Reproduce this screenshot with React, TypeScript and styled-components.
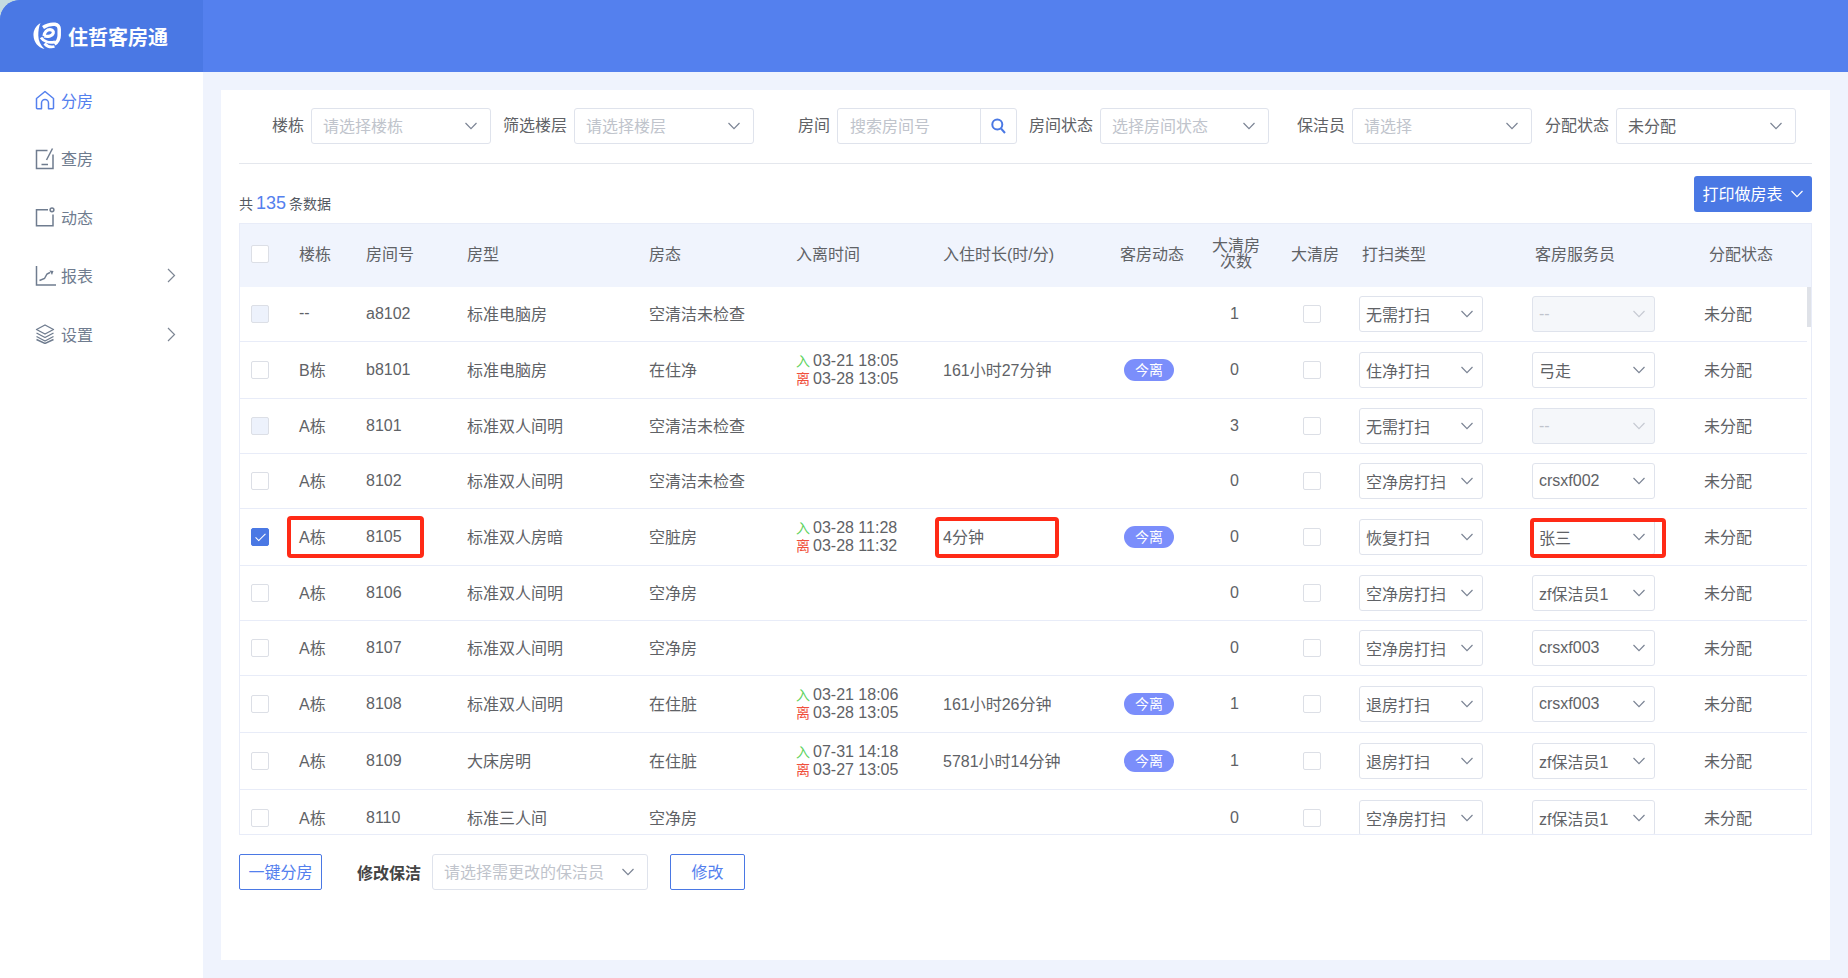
import styled, { createGlobalStyle } from "styled-components"
import { ReactNode } from "react"

const GlobalStyle = createGlobalStyle`
  html, body { margin: 0; padding: 0; height: 100%; }
  body {
    background: #eff3fd;
    font-family: "Liberation Sans", "Noto Sans CJK SC", sans-serif;
    font-size: 16px;
    color: #606266;
    overflow: hidden;
  }
  * { box-sizing: border-box; }
`

const COLUMNS = "59px 67px 101px 182px 147px 147px 177px 81px 70px 88px 173px 172px 1fr"

type RoomRow = {
  building: string
  room: string
  type: string
  status: string
  checkIn?: string
  checkOut?: string
  duration?: string
  count: number
  clean: string
  staff: string
  locked?: boolean
  checked?: boolean
  height: number
}

const rows: RoomRow[] = [
  { building: "--", room: "a8102", type: "标准电脑房", status: "空清洁未检查", count: 1, clean: "无需打扫", staff: "--", locked: true, height: 55 },
  { building: "B栋", room: "b8101", type: "标准电脑房", status: "在住净", checkIn: "03-21 18:05", checkOut: "03-28 13:05", duration: "161小时27分钟", count: 0, clean: "住净打扫", staff: "弓走", height: 57 },
  { building: "A栋", room: "8101", type: "标准双人间明", status: "空清洁未检查", count: 3, clean: "无需打扫", staff: "--", locked: true, height: 55 },
  { building: "A栋", room: "8102", type: "标准双人间明", status: "空清洁未检查", count: 0, clean: "空净房打扫", staff: "crsxf002", height: 55 },
  { building: "A栋", room: "8105", type: "标准双人房暗", status: "空脏房", checkIn: "03-28 11:28", checkOut: "03-28 11:32", duration: "4分钟", count: 0, clean: "恢复打扫", staff: "张三", checked: true, height: 57 },
  { building: "A栋", room: "8106", type: "标准双人间明", status: "空净房", count: 0, clean: "空净房打扫", staff: "zf保洁员1", height: 55 },
  { building: "A栋", room: "8107", type: "标准双人间明", status: "空净房", count: 0, clean: "空净房打扫", staff: "crsxf003", height: 55 },
  { building: "A栋", room: "8108", type: "标准双人间明", status: "在住脏", checkIn: "03-21 18:06", checkOut: "03-28 13:05", duration: "161小时26分钟", count: 1, clean: "退房打扫", staff: "crsxf003", height: 57 },
  { building: "A栋", room: "8109", type: "大床房明", status: "在住脏", checkIn: "07-31 14:18", checkOut: "03-27 13:05", duration: "5781小时14分钟", count: 1, clean: "退房打扫", staff: "zf保洁员1", height: 57 },
  { building: "A栋", room: "8110", type: "标准三人间", status: "空净房", count: 0, clean: "空净房打扫", staff: "zf保洁员1", height: 57 },
]

const Chevron = ({ color = "#7b8494" }: { color?: string }) => (
  <svg width="14" height="8" viewBox="0 0 14 8" fill="none" stroke={color} strokeWidth="1.2">
    <path d="M1.5 1l5.5 5.6L12.500 1" />
  </svg>
)

const Logo = () => (
  <svg width="28" height="28" viewBox="0 0 28 28" fill="none" stroke="#fff">
    <path d="M7.500 1C2.500 4 .3 8.500.5 13.500.8 20 5 25.500 11.500 27 7.500 23 5.300 18.500 5.300 13.500 5.300 9 5.800 4.500 7.500 1z" fill="#fff" stroke="none" />
    <path d="M10 5.500C14 2.800 18 1.800 22 2.300c3 .5 4.200 2 4.200 5v6c0 4-1.500 6.700-4.700 8.700" strokeWidth="3.500" />
    <path d="M11 14c.5-3.800 3-6.300 6-6.300 2.500 0 3.800 1.600 3.200 3.500-.8 2.500-4.500 4-9.200 2.800" strokeWidth="3.200" />
    <path d="M8 15.500c2.500 4 8 6 14 4.300" strokeWidth="2.800" />
    <path d="M11.500 21.500c2.500 3 6 4 10 3" strokeWidth="2.800" />
  </svg>
)

const HomeIcon = () => (
  <svg width="20" height="20" viewBox="0 0 20 20" fill="none" stroke="#5480ee" strokeWidth="1.500" strokeLinejoin="round">
    <path d="M1.500 8.500L10 1.500l8.500 7V18a.8.8 0 0 1-.8.8H13.500V13a3.500 3.500 0 0 0-7 0v5.800H2.300a.8.800 0 0 1-.8-.8z" />
  </svg>
)

const CheckIcon = () => (
  <svg width="20" height="22" viewBox="0 0 20 22" fill="none" stroke="#6f7c8f" strokeWidth="1.500">
    <path d="M12.500 2.500H1.500v18h16.500V6.500" />
    <path d="M17.500.5L11.500 12" />
    <path d="M6.500 16.500h6.500" />
  </svg>
)

const DynamicIcon = () => (
  <svg width="20" height="20" viewBox="0 0 20 20" fill="none" stroke="#6f7c8f" strokeWidth="1.500">
    <path d="M13 2.800H1.500v16h16.500V7.500" />
    <circle cx="17" cy="2.800" r="1.900" />
  </svg>
)

const ChartIcon = () => (
  <svg width="22" height="22" viewBox="0 0 22 22" fill="none" stroke="#6f7c8f" strokeWidth="1.500">
    <path d="M1.500 1v19h19.500" />
    <path d="M4.500 15.500l5-2 2.500-4.500 3-1.500" />
    <path d="M14.500 5.500l4 .5-1.500 4z" fill="#6f7c8f" stroke="none" />
  </svg>
)

const LayersIcon = () => (
  <svg width="20" height="20" viewBox="0 0 20 20" fill="none" stroke="#6f7c8f" strokeWidth="1.400" strokeLinejoin="round">
    <path d="M10 1L18.500 5.500 10 10 1.500 5.500z" />
    <path d="M1.500 9L10 13.500 18.500 9" />
    <path d="M1.500 12.500L10 17 18.500 12.500" />
    <path d="M1.500 15.500L10 19.500 18.500 15.500" />
  </svg>
)

const RightArrow = () => (
  <svg width="9" height="15" viewBox="0 0 9 15" fill="none" stroke="#7d8694" strokeWidth="1.200">
    <path d="M1 1l6.500 6.500L1 14" />
  </svg>
)

const SearchIcon = () => (
  <svg width="15" height="16" viewBox="0 0 15 16" fill="none" stroke="#4a78e4" strokeWidth="2">
    <circle cx="6.300" cy="6.500" r="5" />
    <path d="M10 10.500l4 4.500" />
  </svg>
)

const menu: { label: string; icon: ReactNode; active?: boolean; more?: boolean }[] = [
  { label: "分房", icon: <HomeIcon />, active: true },
  { label: "查房", icon: <CheckIcon /> },
  { label: "动态", icon: <DynamicIcon /> },
  { label: "报表", icon: <ChartIcon />, more: true },
  { label: "设置", icon: <LayersIcon />, more: true },
]

type SelectBoxProps = {
  value?: string
  placeholder?: string
  width: number
  disabled?: boolean
  compact?: boolean
}

const SelectBox = ({ value, placeholder, width, disabled, compact }: SelectBoxProps) => (
  <Select $width={width} $disabled={disabled} $compact={compact}>
    <SelectText $muted={!value || disabled} $compact={compact}>{value ?? placeholder}</SelectText>
    <Chevron color={disabled ? "#c6cad2" : "#7b8494"} />
  </Select>
)

export default function App() {
  return (
    <Shell>
      <GlobalStyle />
      <TopBar>
        <Brand>
          <Logo />
          <BrandName>住哲客房通</BrandName>
        </Brand>
      </TopBar>
      <Body>
        <Sidebar>
          {menu.map((item) => (
            <MenuItem key={item.label} $active={item.active}>
              <MenuIcon>{item.icon}</MenuIcon>
              <MenuLabel>{item.label}</MenuLabel>
              {item.more && <RightArrow />}
            </MenuItem>
          ))}
        </Sidebar>
        <Content>
          <Card>
            <Filters>
              <FilterLabel $width={65}>楼栋</FilterLabel>
              <SelectBox placeholder="请选择楼栋" width={180} />
              <FilterLabel>筛选楼层</FilterLabel>
              <SelectBox placeholder="请选择楼层" width={180} />
              <FilterLabel>房间</FilterLabel>
              <SearchInput>
                <SearchText>搜索房间号</SearchText>
                <SearchButton><SearchIcon /></SearchButton>
              </SearchInput>
              <FilterLabel>房间状态</FilterLabel>
              <SelectBox placeholder="选择房间状态" width={169} />
              <FilterLabel>保洁员</FilterLabel>
              <SelectBox placeholder="请选择" width={180} />
              <FilterLabel $width={77}>分配状态</FilterLabel>
              <SelectBox value="未分配" width={180} />
            </Filters>
            <Toolbar>
              <Count>共<CountNumber>135</CountNumber>条数据</Count>
              <PrintButton><ButtonText>打印做房表</ButtonText><Chevron color="#fff" /></PrintButton>
            </Toolbar>
            <TableWrap>
              <HeaderRow>
                <Cell><CheckBox /></Cell>
                <TextCell>楼栋</TextCell>
                <TextCell>房间号</TextCell>
                <TextCell>房型</TextCell>
                <TextCell>房态</TextCell>
                <TextCell>入离时间</TextCell>
                <TextCell>入住时长(时/分)</TextCell>
                <TextCell>客房动态</TextCell>
                <TwoLineHead>大清房<br />次数</TwoLineHead>
                <HeadInset $left={20}>大清房</HeadInset>
                <HeadInset>打扫类型</HeadInset>
                <HeadInset>客房服务员</HeadInset>
                <HeadInset $left={5}>分配状态</HeadInset>
              </HeaderRow>
              <TableBody>
                {rows.map((row) => (
                  <Row key={row.room} $height={row.height}>
                    <Cell><CheckBox $disabled={row.locked} $checked={row.checked} /></Cell>
                    <TextCell>{row.building}</TextCell>
                    <Cell>{row.room}</Cell>
                    <TextCell>{row.type}</TextCell>
                    <TextCell>{row.status}</TextCell>
                    <Cell>
                      {row.checkIn && (
                        <TimeLines>
                          <div><InMark>入</InMark>{row.checkIn}</div>
                          <div><OutMark>离</OutMark>{row.checkOut}</div>
                        </TimeLines>
                      )}
                    </Cell>
                    <TextCell>{row.duration}</TextCell>
                    <Cell>{row.checkIn && <Tag>今离</Tag>}</Cell>
                    <CountCell>{row.count}</CountCell>
                    <Cell><CleanBox /></Cell>
                    <Cell><SelectBox value={row.clean} width={124} compact /></Cell>
                    <Cell><SelectBox value={row.staff} width={123} disabled={row.locked} compact /></Cell>
                    <TextCell>未分配</TextCell>
                    {row.checked && (
                      <>
                        <RedMark $left={47} $top={7} $width={137} $height={42} />
                        <RedMark $left={695} $top={8} $width={124} $height={41} />
                        <RedMark $left={1290} $top={9} $width={136} $height={40} />
                      </>
                    )}
                  </Row>
                ))}
              </TableBody>
              <ScrollThumb />
            </TableWrap>
            <Footer>
              <OutlineButton $width={83}><ButtonText>一键分房</ButtonText></OutlineButton>
              <FooterLabel>修改保洁</FooterLabel>
              <SelectBox placeholder="请选择需更改的保洁员" width={216} />
              <OutlineButton $width={75} $left={22}><ButtonText>修改</ButtonText></OutlineButton>
            </Footer>
          </Card>
        </Content>
      </Body>
    </Shell>
  )
}

const Shell = styled.div`
  width: 100vw;
  height: 100vh;
  display: flex;
  flex-direction: column;
  background: #c4dbe0;
`

const TopBar = styled.header`
  height: 72px;
  flex: none;
  background: #5480ee;
  border-top-left-radius: 20px;
`

const Brand = styled.div`
  width: 203px;
  height: 100%;
  display: flex;
  align-items: center;
  gap: 7px;
  padding-left: 33px;
  background: #4a78e4;
  border-top-left-radius: 20px;
`

const BrandName = styled.span`
  color: #fff;
  font-size: 20px;
  font-weight: 700;
`

const Body = styled.div`
  flex: 1;
  display: flex;
  min-height: 0;
`

const Sidebar = styled.nav`
  width: 203px;
  flex: none;
  background: #fff;
`

const MenuItem = styled.div<{ $active?: boolean }>`
  height: 58.500px;
  display: flex;
  align-items: center;
  padding: 0 27px 2px 35px;
  color: ${(p) => (p.$active ? "#5480ee" : "#6f7c8f")};
`

const MenuIcon = styled.span`
  width: 26px;
  display: flex;
  align-items: center;
`

const MenuLabel = styled.span`
  flex: 1;
  padding-bottom: 1px;
`

const Content = styled.main`
  flex: 1;
  padding: 18px;
  background: #eff3fd;
`

const Card = styled.section`
  height: 870px;
  padding: 18px 18px 0;
  background: #fff;
`

const Filters = styled.div`
  display: flex;
  height: 56px;
  align-items: flex-start;
  border-bottom: 1px solid #e4e7ed;
`

const FilterLabel = styled.label<{ $width?: number }>`
  width: ${(p) => p.$width ?? 76}px;
  padding-right: 7px;
  flex: none;
  box-sizing: content-box;
  text-align: right;
  line-height: 36px;
  white-space: nowrap;
`

const Select = styled.div<{ $width: number; $disabled?: boolean; $compact?: boolean }>`
  width: ${(p) => p.$width}px;
  height: 36px;
  flex: none;
  display: flex;
  align-items: center;
  justify-content: space-between;
  padding: ${(p) => (p.$compact ? "0 8px 0 6px" : "0 12px 0 11px")};
  border: 1px solid #dfe3ec;
  border-radius: 3px;
  background: ${(p) => (p.$disabled ? "#f5f7fa" : "#fff")};
`

const SelectText = styled.span<{ $muted?: boolean; $compact?: boolean }>`
  padding-bottom: ${(p) => (p.$compact ? 0 : 2)}px;
  color: ${(p) => (p.$muted ? "#c0c4cc" : "#606266")};
  white-space: nowrap;
`

const SearchInput = styled.div`
  width: 180px;
  height: 36px;
  flex: none;
  display: flex;
  align-items: center;
  border: 1px solid #dfe3ec;
  border-radius: 3px;
`

const SearchText = styled.span`
  flex: 1;
  padding: 0 0 2px 12px;
  color: #c0c4cc;
`

const SearchButton = styled.span`
  width: 36px;
  height: 100%;
  display: flex;
  align-items: center;
  justify-content: center;
  border-left: 1px solid #dfe3ec;
`

const Toolbar = styled.div`
  height: 59px;
  padding-top: 12px;
  display: flex;
  align-items: flex-start;
  justify-content: space-between;
`

const Count = styled.div`
  margin-top: 17px;
  font-size: 14px;
  line-height: 20px;
  color: #555a63;
`

const CountNumber = styled.span`
  margin: 0 3px;
  font-size: 18px;
  color: #5480ee;
`

const ButtonText = styled.span`
  display: block;
  padding-bottom: 2px;
`

const PrintButton = styled.button`
  width: 118px;
  height: 36px;
  display: flex;
  align-items: center;
  justify-content: center;
  gap: 7px;
  padding: 0;
  border: none;
  border-radius: 3px;
  background: #4a78e4;
  color: #fff;
  font: inherit;
`

const TableWrap = styled.div`
  position: relative;
  height: 612px;
  overflow: hidden;
  border: 1px solid #e8ecf8;
  border-top-width: 0;
`

const HeaderRow = styled.div`
  height: 64px;
  display: grid;
  grid-template-columns: ${COLUMNS};
  align-items: center;
  padding-bottom: 4px;
  background: #f0f4fd;
  border-top: 1px solid #e8ecf8;
`

const TableBody = styled.div`
  width: 1567px;
`

const Row = styled.div<{ $height: number }>`
  position: relative;
  height: ${(p) => p.$height}px;
  display: grid;
  grid-template-columns: ${COLUMNS};
  align-items: center;
  border-bottom: 1px solid #e8ecf8;
`

const Cell = styled.div`
  white-space: nowrap;
`

const TextCell = styled(Cell)`
  padding-bottom: 2px;
`

const CountCell = styled(Cell)`
  padding-right: 3px;
  text-align: center;
`

const TwoLineHead = styled(Cell)`
  text-align: center;
  line-height: 16px;
`

const HeadInset = styled(Cell)<{ $left?: number }>`
  padding: 0 0 2px ${(p) => p.$left ?? 3}px;
`

const CheckBox = styled.span<{ $disabled?: boolean; $checked?: boolean }>`
  position: relative;
  display: block;
  width: 18px;
  height: 18px;
  margin-left: 11px;
  border: 1px solid ${(p) => (p.$checked ? "#4a78e4" : "#dcdfe6")};
  border-radius: 2px;
  background: ${(p) => (p.$checked ? "#4a78e4" : p.$disabled ? "#edf2fc" : "#fff")};
  &::after {
    content: "";
    display: ${(p) => (p.$checked ? "block" : "none")};
    position: absolute;
    left: 5.500px;
    top: 2px;
    width: 4px;
    height: 9px;
    border: solid #fff;
    border-width: 0 1px 1px 0;
    transform: rotate(45deg);
  }
`

const CleanBox = styled(CheckBox)`
  margin-left: 32px;
`

const TimeLines = styled.div`
  line-height: 18px;
  font-size: 16px;
`

const InMark = styled.span`
  margin-right: 3px;
  font-size: 14px;
  color: #5fd35f;
`

const OutMark = styled.span`
  margin-right: 3px;
  font-size: 14px;
  color: #f0503c;
`

const Tag = styled.span`
  display: block;
  width: 50px;
  height: 22px;
  margin-left: 4px;
  border-radius: 11px;
  background: #7b8efb;
  color: #fff;
  font-size: 14px;
  line-height: 22px;
  text-align: center;
`

const RedMark = styled.div<{ $left: number; $top: number; $width: number; $height: number }>`
  position: absolute;
  left: ${(p) => p.$left}px;
  top: ${(p) => p.$top}px;
  width: ${(p) => p.$width}px;
  height: ${(p) => p.$height}px;
  border: 4px solid #ff2a16;
  border-radius: 4px;
`

const ScrollThumb = styled.div`
  position: absolute;
  right: 0;
  top: 64px;
  width: 4px;
  height: 40px;
  background: #dfe2e8;
`

const Footer = styled.div`
  display: flex;
  align-items: center;
  margin-top: 19px;
`

const OutlineButton = styled.button<{ $width: number; $left?: number }>`
  width: ${(p) => p.$width}px;
  height: 36px;
  margin-left: ${(p) => p.$left ?? 0}px;
  padding: 0;
  border: 1px solid #4a78e4;
  border-radius: 2px;
  background: #fff;
  color: #5480ee;
  font: inherit;
`

const FooterLabel = styled.span`
  margin: 0 11px 0 35px;
  color: #444;
  font-weight: 700;
`
